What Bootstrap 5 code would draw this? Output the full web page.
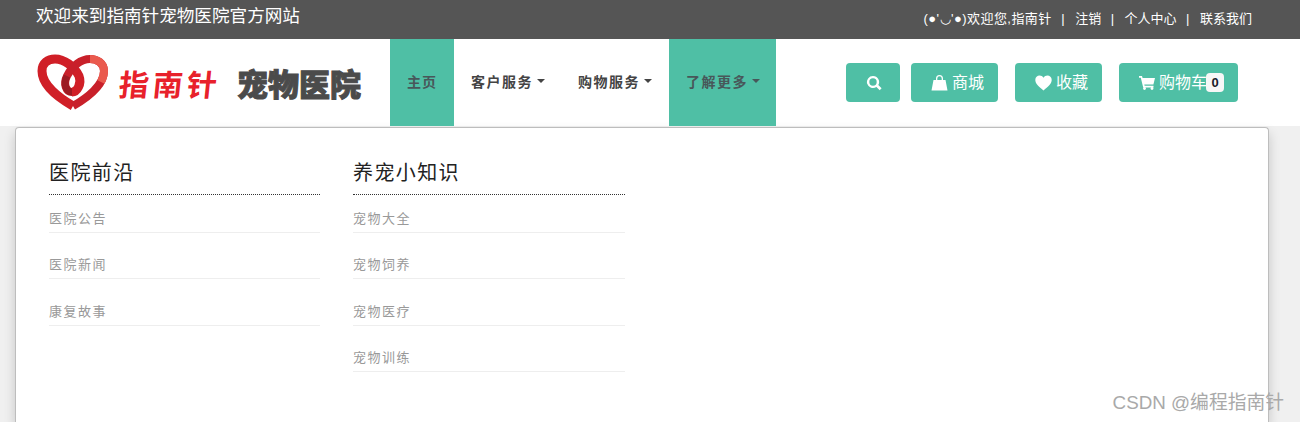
<!DOCTYPE html>
<html lang="en">
<head>
  <meta charset="UTF-8">
  <meta name="viewport" content="width=device-width, initial-scale=1.0">
  <title>指南针宠物医院</title>
  <link href="https://cdn.jsdelivr.net/npm/bootstrap@5.3.3/dist/css/bootstrap.min.css" rel="stylesheet">
  <style>
    body {
      font-family: "Liberation Sans", "Noto Sans CJK SC", sans-serif;
      background: #f0f0f0;
      height: 422px;
      overflow: hidden;
    }
    .top-strip {
      height: 39px;
      background: #555;
      color: #fff;
      padding: 0 48px 0 36px;
    }
    .top-strip .site-hello { font-size: 17.6px; margin-top: -6px; }
    .top-strip .user-links { font-size: 13px; margin-top: -2px; }
    .top-strip .user-links span { letter-spacing: .45px; }
    .top-strip .user-links a { color: #fff; text-decoration: none; }
    .top-strip .user-links i { font-style: normal; margin: 0 10.5px 0 9.5px; }
    .main-bar {
      height: 87px;
      background: #fff;
      padding-left: 36px;
    }
    .logo-box { width: 354px; }
    .logo-red {
      font-family: "Noto Sans CJK SC", sans-serif;
      font-weight: 700;
      font-size: 30px;
      color: #e8212b;
      letter-spacing: 4px;
      margin-left: 9px;
      line-height: 1;
      transform: skewX(-6deg);
    }
    .logo-gray {
      font-family: "Noto Sans CJK SC", sans-serif;
      font-weight: 900;
      font-size: 31px;
      color: #4b4b4b;
      -webkit-text-stroke: 1px #4b4b4b;
      margin-left: 16px;
      line-height: 1;
    }
    .menu-link {
      color: #444;
      font-size: 14px;
      font-weight: 700;
      letter-spacing: 1.5px;
      text-decoration: none;
      padding: 0 16px 0 17px;
    }
    .menu-link.on { background: #4fbfa5; color: #48575a; }
    .menu-link.home-link { width: 64px; letter-spacing: 1px; }
    .menu-link.more-link { margin-left: 1px; }
    .menu-link .tri {
      display: inline-block;
      margin-left: 2.500px;
      margin-left: 4px;
      border-top: 4px solid currentColor;
      border-left: 4.5px solid transparent;
      border-right: 4.5px solid transparent;
      margin-top: -3px;
    }
    .tool-btns { margin-left: 70px; }
    .btn-mint {
      background: #4fbfa5;
      color: #fff;
      height: 39px;
      font-size: 16px;
      border: 0;
      border-radius: 4px;
      padding: 0 0 0 20px;
      margin-right: 11px;
      position: relative;
    }
    .btn-mint:hover { background: #4fbfa5; color: #fff; }
    .btn-mint svg { fill: #fff; }
    .cart-num {
      position: absolute;
      left: 87px;
      top: 10px;
      width: 18px;
      height: 19px;
      line-height: 19px;
      background: #f7f7f7;
      color: #1a1a2a;
      font-size: 13px;
      font-weight: 700;
      border-radius: 4px;
    }
    .mega-panel {
      height: 295px;
      margin: 1px 31px 0 15px;
      padding: 33px 33px 0;
      background: #fff;
      border: 1px solid #bdbdbd;
      border-bottom: 0;
      border-radius: 4px 4px 0 0;
      box-shadow: 0 6px 12px rgba(0, 0, 0, .175);
    }
    .mega-col { width: 271px; margin-right: 33px; }
    .mega-col + .mega-col { width: 272px; }
    .mega-col h5 {
      font-size: 20px;
      font-weight: 400;
      letter-spacing: 1.4px;
      color: #222;
      line-height: 24px;
      margin: 0;
      padding-bottom: 9px;
      border-bottom: 1px dotted #333;
    }
    .mega-col a {
      display: block;
      height: 38px;
      margin-top: 8.3px;
      padding-top: 15px;
      font-size: 13px;
      letter-spacing: 1.5px;
      line-height: 18px;
      color: #999;
      text-decoration: none;
      border-bottom: 1px solid #eee;
    }
    .mega-col h5 + a { margin-top: 0; }
    .wm {
      position: absolute;
      right: 16px;
      bottom: 7px;
      font-size: 18.8px;
      color: #a9a9a9;
      line-height: 24px;
    }
  </style>
</head>
<body class="position-relative">
  <div class="top-strip d-flex justify-content-between align-items-center">
    <div class="site-hello">欢迎来到指南针宠物医院官方网站</div>
    <div class="user-links">
      <span>(●'◡'●)欢迎您,指南针</span><i>|</i><a href="#">注销</a><i>|</i><a href="#">个人中心</a><i>|</i><a href="#">联系我们</a>
    </div>
  </div>

  <div class="main-bar d-flex align-items-stretch">
    <div class="logo-box d-flex align-items-center">
      <svg width="74" height="58" viewBox="0 0 74 58" fill="none" stroke-linejoin="round">
        <path d="M37 52C23 44 6 31 6 17 6 9 12 5 19 5c9 0 19 7 24 17 3 8-2 16-7 16" stroke="#d01f27" stroke-width="9"/>
        <path d="M36 38c-6 0-9-8-5-16C36 12 45 5 54 5c7 0 14 4 14 12 0 14-17 27-31 35" stroke="#c8202a" stroke-width="8"/>
        <path d="M54 5c7 0 14 4 14 12 0 4-1 7-3 11" stroke="#ea5a4e" stroke-width="8"/>
        <path d="M31 22c-4 8-1 16 5 16" stroke="#9c1a22" stroke-width="7"/>
      </svg>
      <span class="logo-red">指南针</span>
      <span class="logo-gray">宠物医院</span>
    </div>
    <a class="menu-link on home-link d-flex align-items-center" href="#">主页</a>
    <a class="menu-link d-flex align-items-center" href="#">客户服务<span class="tri"></span></a>
    <a class="menu-link d-flex align-items-center" href="#">购物服务<span class="tri"></span></a>
    <a class="menu-link on more-link d-flex align-items-center" href="#">了解更多<span class="tri"></span></a>
    <div class="tool-btns d-flex align-items-center">
      <button class="btn btn-mint d-flex align-items-center" style="width:54px">
        <svg width="16" height="16" viewBox="0 0 16 16"><path d="M7 1a6 6 0 1 0 3.400 10.900l3.300 3.300 1.900-1.900-3.300-3.300A6 6 0 0 0 7 1zm0 2.300a3.700 3.700 0 1 1 0 7.400 3.700 3.700 0 0 1 0-7.400z"/></svg>
      </button>
      <button class="btn btn-mint d-flex align-items-center gap-1" style="width:87px">
        <svg width="17" height="17" viewBox="0 0 17 17"><path d="M2.500 6h12l2 10.500H.5zM5 6V4.500a3.500 3.500 0 0 1 7 0V6h-1.300V4.500a2.200 2.200 0 0 0-4.400 0V6z"/></svg>
        商城
      </button>
      <button class="btn btn-mint d-flex align-items-center gap-1" style="width:87px;margin-left:6px">
        <svg width="17" height="16" viewBox="0 0 17 16"><path d="M8.500 15.500C4 11.600.3 8.700.3 5 .3 2.400 2.300.6 4.600.6c1.600 0 3 .8 3.900 2.200C9.400 1.400 10.800.6 12.400.6c2.300 0 4.300 1.800 4.300 4.400 0 3.700-3.700 6.600-8.200 10.500z"/></svg>
        收藏
      </button>
      <button class="btn btn-mint d-flex align-items-center gap-1" style="width:119px;margin-left:6px">
        <svg width="16" height="15" viewBox="0 0 16 15"><path d="M0 1h3l.6 2H16l-1.600 6.500H5.300l.3 1.300h8.900V12.500H4.200L1.800 2.700H0z"/><circle cx="5.500" cy="13.500" r="1.400"/><circle cx="13" cy="13.500" r="1.400"/></svg>
        购物车<span class="cart-num">0</span>
      </button>
    </div>
  </div>

  <div class="mega-panel d-flex">
    <div class="mega-col">
      <h5>医院前沿</h5>
      <a href="#">医院公告</a>
      <a href="#">医院新闻</a>
      <a href="#">康复故事</a>
    </div>
    <div class="mega-col">
      <h5>养宠小知识</h5>
      <a href="#">宠物大全</a>
      <a href="#">宠物饲养</a>
      <a href="#">宠物医疗</a>
      <a href="#">宠物训练</a>
    </div>
  </div>

  <div class="wm">CSDN @编程指南针</div>

  <script src="https://cdn.jsdelivr.net/npm/bootstrap@5.3.3/dist/js/bootstrap.bundle.min.js"></script>
</body>
</html>
